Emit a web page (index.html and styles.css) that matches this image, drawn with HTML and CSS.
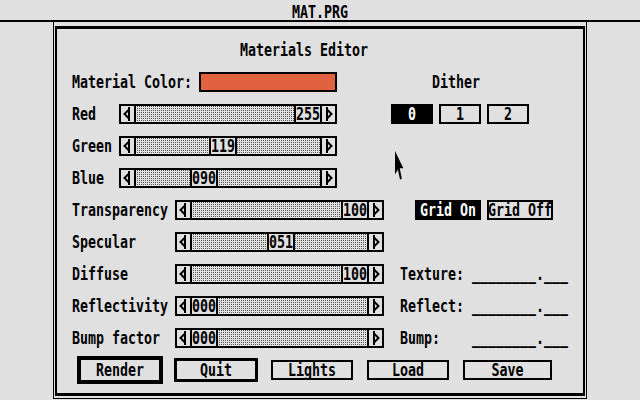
FILE: index.html
```html
<!DOCTYPE html>
<html>
<head>
<meta charset="utf-8">
<title>MAT.PRG</title>
<link rel="stylesheet" href="styles.css">
</head>
<body>
<div class="titlebar"><span class="t">MAT.PRG</span></div>
<div class="window">
  <div class="dialog">
    <div class="row"><span class="t title">Materials Editor</span></div>

    <div class="row">
      <span class="t lab-a">Material Color:</span>
      <div class="swatch"></div>
      <span class="t dither-lab">Dither</span>
    </div>

    <div class="row">
      <span class="t lab-rgb">Red</span>
      <div class="slider s-rgb">
        <div class="arrow l"><svg width="9" height="14" viewBox="0 0 9 14"><path d="M6 0 V14 M6 2.5 L1.5 7 L6 11.5" fill="none" stroke="#000" stroke-width="2"/></svg></div>
        <div class="track"><div class="thumb" style="left:158px"><span class="t">255</span></div></div>
        <div class="arrow r"><svg width="9" height="14" viewBox="0 0 9 14"><path d="M3 0 V14 M3 2.5 L7.5 7 L3 11.5" fill="none" stroke="#000" stroke-width="2"/></svg></div>
      </div>
      <div class="dither">
        <div class="btn dbtn sel"><span class="t">0</span></div>
        <div class="btn dbtn"><span class="t">1</span></div>
        <div class="btn dbtn"><span class="t">2</span></div>
      </div>
    </div>

    <div class="row">
      <span class="t lab-rgb">Green</span>
      <div class="slider s-rgb">
        <div class="arrow l"><svg width="9" height="14" viewBox="0 0 9 14"><path d="M6 0 V14 M6 2.5 L1.5 7 L6 11.5" fill="none" stroke="#000" stroke-width="2"/></svg></div>
        <div class="track"><div class="thumb" style="left:73px"><span class="t">119</span></div></div>
        <div class="arrow r"><svg width="9" height="14" viewBox="0 0 9 14"><path d="M3 0 V14 M3 2.5 L7.5 7 L3 11.5" fill="none" stroke="#000" stroke-width="2"/></svg></div>
      </div>
    </div>

    <div class="row">
      <span class="t lab-rgb">Blue</span>
      <div class="slider s-rgb">
        <div class="arrow l"><svg width="9" height="14" viewBox="0 0 9 14"><path d="M6 0 V14 M6 2.5 L1.5 7 L6 11.5" fill="none" stroke="#000" stroke-width="2"/></svg></div>
        <div class="track"><div class="thumb" style="left:54px"><span class="t">090</span></div></div>
        <div class="arrow r"><svg width="9" height="14" viewBox="0 0 9 14"><path d="M3 0 V14 M3 2.5 L7.5 7 L3 11.5" fill="none" stroke="#000" stroke-width="2"/></svg></div>
      </div>
    </div>

    <div class="row">
      <span class="t lab-b">Transparency</span>
      <div class="slider s-low">
        <div class="arrow l"><svg width="9" height="14" viewBox="0 0 9 14"><path d="M6 0 V14 M6 2.5 L1.5 7 L6 11.5" fill="none" stroke="#000" stroke-width="2"/></svg></div>
        <div class="track"><div class="thumb" style="left:149px"><span class="t">100</span></div></div>
        <div class="arrow r"><svg width="9" height="14" viewBox="0 0 9 14"><path d="M3 0 V14 M3 2.5 L7.5 7 L3 11.5" fill="none" stroke="#000" stroke-width="2"/></svg></div>
      </div>
      <div class="grid">
        <div class="btn gbtn sel"><span class="t">Grid On</span></div>
        <div class="btn gbtn"><span class="t">Grid Off</span></div>
      </div>
    </div>

    <div class="row">
      <span class="t lab-b">Specular</span>
      <div class="slider s-low">
        <div class="arrow l"><svg width="9" height="14" viewBox="0 0 9 14"><path d="M6 0 V14 M6 2.5 L1.5 7 L6 11.5" fill="none" stroke="#000" stroke-width="2"/></svg></div>
        <div class="track"><div class="thumb" style="left:75px"><span class="t">051</span></div></div>
        <div class="arrow r"><svg width="9" height="14" viewBox="0 0 9 14"><path d="M3 0 V14 M3 2.5 L7.5 7 L3 11.5" fill="none" stroke="#000" stroke-width="2"/></svg></div>
      </div>
    </div>

    <div class="row">
      <span class="t lab-b">Diffuse</span>
      <div class="slider s-low">
        <div class="arrow l"><svg width="9" height="14" viewBox="0 0 9 14"><path d="M6 0 V14 M6 2.5 L1.5 7 L6 11.5" fill="none" stroke="#000" stroke-width="2"/></svg></div>
        <div class="track"><div class="thumb" style="left:149px"><span class="t">100</span></div></div>
        <div class="arrow r"><svg width="9" height="14" viewBox="0 0 9 14"><path d="M3 0 V14 M3 2.5 L7.5 7 L3 11.5" fill="none" stroke="#000" stroke-width="2"/></svg></div>
      </div>
      <span class="t rlab">Texture: ________.___</span>
    </div>

    <div class="row">
      <span class="t lab-b">Reflectivity</span>
      <div class="slider s-low">
        <div class="arrow l"><svg width="9" height="14" viewBox="0 0 9 14"><path d="M6 0 V14 M6 2.5 L1.5 7 L6 11.5" fill="none" stroke="#000" stroke-width="2"/></svg></div>
        <div class="track"><div class="thumb" style="left:-2px"><span class="t">000</span></div></div>
        <div class="arrow r"><svg width="9" height="14" viewBox="0 0 9 14"><path d="M3 0 V14 M3 2.5 L7.5 7 L3 11.5" fill="none" stroke="#000" stroke-width="2"/></svg></div>
      </div>
      <span class="t rlab">Reflect: ________.___</span>
    </div>

    <div class="row">
      <span class="t lab-b">Bump factor</span>
      <div class="slider s-low">
        <div class="arrow l"><svg width="9" height="14" viewBox="0 0 9 14"><path d="M6 0 V14 M6 2.5 L1.5 7 L6 11.5" fill="none" stroke="#000" stroke-width="2"/></svg></div>
        <div class="track"><div class="thumb" style="left:-2px"><span class="t">000</span></div></div>
        <div class="arrow r"><svg width="9" height="14" viewBox="0 0 9 14"><path d="M3 0 V14 M3 2.5 L7.5 7 L3 11.5" fill="none" stroke="#000" stroke-width="2"/></svg></div>
      </div>
      <span class="t rlab">Bump:    ________.___</span>
    </div>

    <div class="row">
      <div class="btn pb render"><span class="t">Render</span></div>
      <div class="btn pb quit"><span class="t">Quit</span></div>
      <div class="btn pb lights"><span class="t">Lights</span></div>
      <div class="btn pb load"><span class="t">Load</span></div>
      <div class="btn pb save"><span class="t">Save</span></div>
    </div>
  </div>
</div>
<svg class="cursor" width="11" height="30" viewBox="0 0 10 14" preserveAspectRatio="none"><path d="M0 0 L0 11 L2.6 8.6 L4.6 13.4 L6.2 12.8 L4.3 8.1 L7.6 8.1 Z" fill="#000"/></svg>
</body>
</html>
```
FILE: styles.css
```css
* { box-sizing: border-box; }
html, body { margin: 0; padding: 0; }
body {
  width: 640px;
  height: 400px;
  background: #e0e0e0;
  color: #000;
  font-family: "DejaVu Sans Mono", "Liberation Mono", monospace;
  font-weight: bold;
  font-size: 13.3px;
  line-height: 16px;
  position: relative;
  overflow: hidden;
}
.t {
  display: inline-block;
  white-space: pre;
  transform: scaleY(1.38);
}
.titlebar {
  height: 22px;
  border-bottom: 2px solid #000;
  text-align: center;
  padding-top: 4px;
}
.window {
  margin-left: 53px;
  width: 534px;
  height: 377px;
  border: 1px solid #000;
  border-top: 0;
  padding: 4px 1px 2px 1px;
}
.dialog {
  height: 370px;
  border: solid #000;
  border-width: 3px 2px 3px 2px;
  padding: 11px 0 0 15px;
  display: flex;
  flex-direction: column;
  gap: 12px;
}
.row {
  height: 20px;
  flex-shrink: 0;
  display: flex;
  align-items: center;
}
.title { margin-left: 168px; }
.lab-a { width: 127px; }
.lab-rgb { width: 47px; }
.lab-b { width: 103px; }
.swatch {
  width: 138px;
  height: 20px;
  border: 2px solid #000;
  background: #e0623f;
}
.dither-lab { margin-left: 95px; }

.slider {
  height: 20px;
  border: 2px solid #000;
  display: flex;
  background: #e0e0e0;
}
.s-rgb { width: 218px; }
.s-low { width: 209px; }
.arrow {
  width: 15px;
  display: flex;
  align-items: center;
  justify-content: center;
}
.arrow svg { display: block; }
.arrow.l { border-right: 2px solid #000; }
.arrow.r { border-left: 2px solid #000; }
.track {
  flex: 1;
  position: relative;
  background-color: #e0e0e0;
  background-image: conic-gradient(#555 25%, transparent 0);
  background-size: 2px 2px;
}
.thumb {
  position: absolute;
  top: 0;
  bottom: 0;
  width: 28px;
  border-left: 2px solid #000;
  border-right: 2px solid #000;
  background: #e0e0e0;
  display: flex;
  align-items: center;
  justify-content: center;
}

.btn {
  height: 20px;
  border: 2px solid #000;
  display: flex;
  align-items: center;
  justify-content: center;
  flex-shrink: 0;
}
.btn.sel { background: #000; color: #fff; }
.dither { display: flex; gap: 6px; margin-left: 54px; }
.dbtn { width: 42px; }
.grid { display: flex; gap: 6px; margin-left: 31px; }
.gbtn { width: 66px; }
.rlab { margin-left: 16px; }

.pb { width: 82px; }
.render { width: 86px; height: 28px; border-width: 4px; margin-left: 5px; }
.quit { width: 84px; height: 24px; border-width: 3px; margin-left: 11px; }
.lights { margin-left: 13px; }
.load { margin-left: 14px; }
.save { width: 89px; margin-left: 14px; }

.cursor {
  position: absolute;
  left: 395px;
  top: 151px;
}
```
